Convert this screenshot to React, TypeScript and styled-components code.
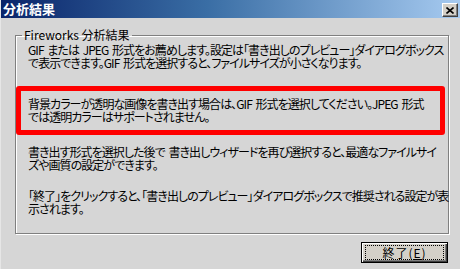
import React from 'react'
import styled, { createGlobalStyle } from 'styled-components'

const GlobalStyle = createGlobalStyle`
  html, body {
    margin: 0;
    padding: 0;
    background: #d6d6d6;
  }
  body {
    font-family: "Noto Sans CJK JP", "Liberation Sans", sans-serif;
    font-size: 12px;
    color: #000;
  }
`

const Window = styled.div`
  width: 460px;
  height: 269px;
  background: #d6d6d6;
  border-left: 1px solid #e6e6e6;
  box-sizing: border-box;
  display: flex;
  flex-direction: column;
  overflow: hidden;
`

const TitleBar = styled.div`
  height: 18px;
  flex-shrink: 0;
  display: flex;
  align-items: center;
  justify-content: space-between;
  padding: 0 2px 0 2px;
  background: linear-gradient(90deg, #0a246a 0%, #3a6ea5 45%, #a6caf0 100%);
`

const Title = styled.span`
  color: #fff;
  font-weight: 700;
  font-size: 13px;
  line-height: 18px;
`

const CloseButton = styled.div`
  width: 16px;
  height: 14px;
  box-sizing: border-box;
  background: #d4d0c8;
  border-top: 1px solid #fff;
  border-left: 1px solid #fff;
  border-right: 1px solid #404040;
  border-bottom: 1px solid #404040;
  box-shadow: inset -1px -1px #808080;
  display: flex;
  align-items: center;
  justify-content: center;
  margin-top: 2px;
`

const Body = styled.div`
  flex: 1;
  min-height: 0;
  display: flex;
  flex-direction: column;
  padding: 10px 12px 0 14px;
`

const GroupBox = styled.fieldset`
  margin: 0;
  padding: 0 3px 0 0;
  min-width: 0;
  width: 434px;
  height: 206px;
  flex-shrink: 0;
  box-sizing: border-box;
  border: 1px solid #808080;
  box-shadow: inset 1px 1px #fff, 1px 1px #fff;
`

const Legend = styled.legend`
  margin-left: 6px;
  padding: 0 2px;
  font-size: 12px;
  line-height: 14px;
`

const Para = styled.p<{ $top: number }>`
  margin: ${p => p.$top}px 0 0;
  padding: 0 0 0 12px;
  font-size: 12px;
  line-height: 13px;
  letter-spacing: -0.95px;
  word-spacing: 2px;
  font-feature-settings: "palt";
  white-space: nowrap;
`

const Highlight = styled.div`
  margin: 17px 0 0 0;
  border: 5px solid #ff0000;
  border-radius: 3px;
  padding: 6px 0 7px;

  ${Para} {
    padding-left: 7px;
  }
`

const Footer = styled.div`
  display: flex;
  justify-content: flex-end;
  padding: 8px 0 0;
`

const Button = styled.button`
  width: 87px;
  height: 21px;
  box-sizing: border-box;
  padding: 0;
  background: #d4d0c8;
  border: 1px solid #000;
  box-shadow: inset 1px 1px #fff, inset -1px -1px #404040, inset -2px -2px #808080;
  font-family: "Noto Sans CJK JP", "Liberation Sans", sans-serif;
  font-size: 12px;
  color: #000;
  display: flex;
  align-items: center;
  justify-content: center;
`

const FocusRing = styled.span`
  width: 77px;
  height: 13px;
  border: 1px dotted #000;
  display: flex;
  align-items: center;
  justify-content: center;
  line-height: 13px;
  letter-spacing: 1px;
`

const Accel = styled.u`
  text-decoration: underline;
  text-underline-offset: 1px;
`

export default function App() {
  return (
    <>
      <GlobalStyle />
      <Window>
        <TitleBar>
          <Title>分析結果</Title>
          <CloseButton>
            <svg width="8" height="7" viewBox="0 0 8 7">
              <path d="M0.5 0.5 L7.5 6.5 M7.5 0.5 L0.5 6.5" stroke="#000" strokeWidth="1.6" />
            </svg>
          </CloseButton>
        </TitleBar>
        <Body>
          <GroupBox>
            <Legend>Fireworks 分析結果</Legend>
            <Para $top={1}>
              GIF または JPEG 形式をお薦めします。設定は「書き出しのプレビュー」ダイアログボックス
              <br />
              で表示できます。GIF 形式を選択すると、ファイルサイズが小さくなります。
            </Para>
            <Highlight>
              <Para $top={0}>
                背景カラーが透明な画像を書き出す場合は、GIF 形式を選択してください。JPEG 形式
                <br />
                では透明カラーはサポートされません。
              </Para>
            </Highlight>
            <Para $top={10}>
              書き出す形式を選択した後で 書き出しウィザードを再び選択すると、最適なファイルサイ
              <br />
              ズや画質の設定ができます。
            </Para>
            <Para $top={18}>
              「終了」をクリックすると、「書き出しのプレビュー」ダイアログボックスで推奨される設定が表
              <br />
              示されます。
            </Para>
          </GroupBox>
          <Footer>
            <Button>
              <FocusRing>
                終了(<Accel>E</Accel>)
              </FocusRing>
            </Button>
          </Footer>
        </Body>
      </Window>
    </>
  )
}
